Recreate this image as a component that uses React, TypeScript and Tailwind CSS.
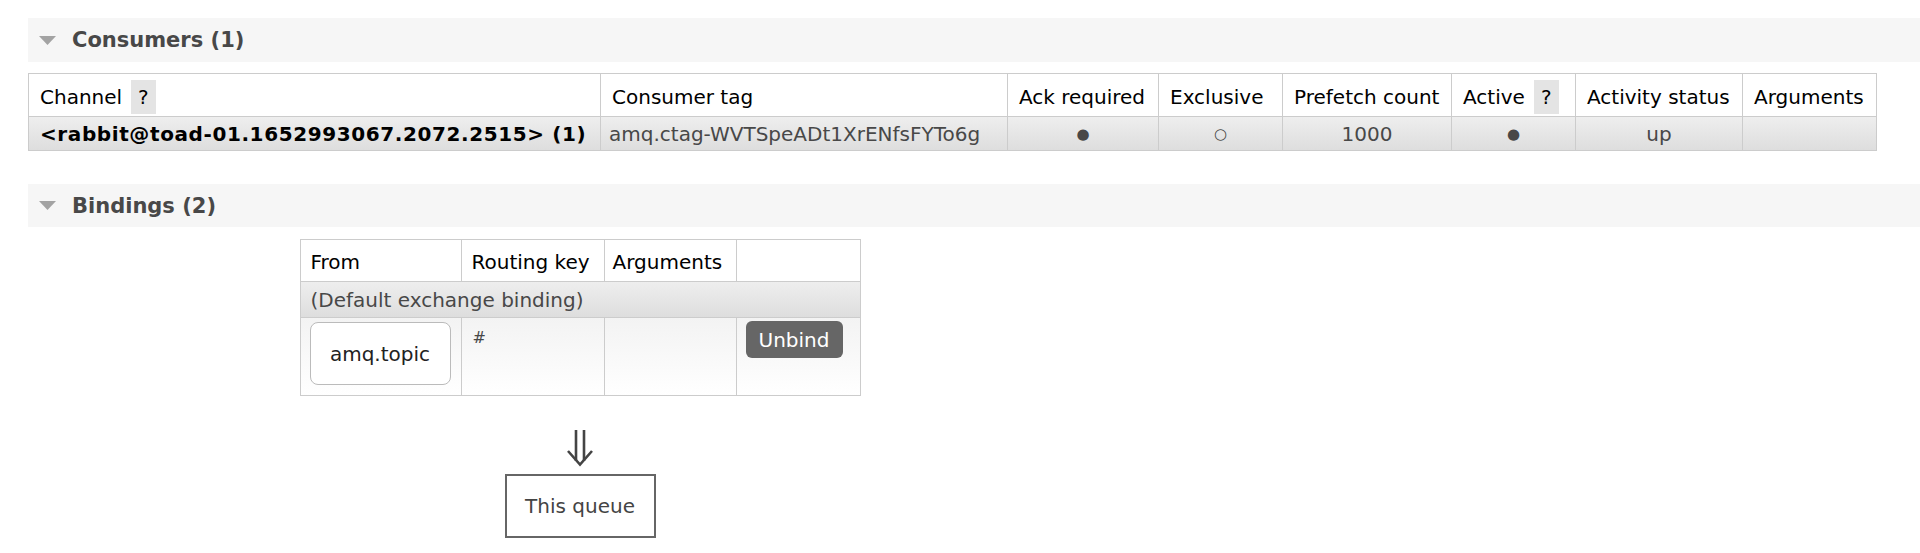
import React from "react";

function SectionHeader({ title, tall }: { title: string; tall?: boolean }) {
  return (
    <div
      className={`flex items-center bg-[#f6f6f6] pl-[11px] ${tall ? "h-[44px]" : "h-[43px]"}`}
    >
      <svg width="17" height="9" viewBox="0 0 17 9" className="mr-[16px]">
        <polygon points="0,0 17,0 8.5,9" fill="#a3a3a3" />
      </svg>
      <h2 className="text-[21px] leading-[26px] font-bold text-[#484848]">{title}</h2>
    </div>
  );
}

function Help() {
  return (
    <span className="ml-[9px] inline-block bg-[#e4e4e4] px-[7px] py-[5px] leading-[24px]">
      ?
    </span>
  );
}

const th =
  "border border-[#cccccc] px-[11px] pt-[3px] pb-0 text-left font-normal whitespace-nowrap text-black";
const td = "border border-[#cccccc] px-[11px] py-0 whitespace-nowrap text-[#484848]";
const grayRow = "h-[34px] bg-gradient-to-b from-[#eeeeee] to-[#dddddd]";

function ConsumersTable() {
  return (
    <table className="mt-[11px] w-[1848px] table-fixed border-collapse">
      <colgroup>
        <col className="w-[572px]" />
        <col className="w-[407px]" />
        <col className="w-[151px]" />
        <col className="w-[124px]" />
        <col className="w-[169px]" />
        <col className="w-[124px]" />
        <col className="w-[167px]" />
        <col className="w-[134px]" />
      </colgroup>
      <thead>
        <tr className="h-[43px] bg-white">
          <th className={th}>
            Channel
            <Help />
          </th>
          <th className={th}>Consumer tag</th>
          <th className={th}>Ack required</th>
          <th className={th}>Exclusive</th>
          <th className={th}>Prefetch count</th>
          <th className={th}>
            Active
            <Help />
          </th>
          <th className={th}>Activity status</th>
          <th className={th}>Arguments</th>
        </tr>
      </thead>
      <tbody>
        <tr className={grayRow}>
          <td className={`${td} font-bold tracking-[0.6px] text-black`}>
            &lt;rabbit@toad-01.1652993067.2072.2515&gt; (1)
          </td>
          <td className={`${td} pl-[8px]`}>amq.ctag-WVTSpeADt1XrENfsFYTo6g</td>
          <td className={`${td} text-center text-[15px]`}>●</td>
          <td className={`${td} text-center text-[15px]`}>○</td>
          <td className={`${td} text-center`}>1000</td>
          <td className={`${td} text-center text-[15px]`}>●</td>
          <td className={`${td} text-center`}>up</td>
          <td className={td}></td>
        </tr>
      </tbody>
    </table>
  );
}

function BindingsTable() {
  return (
    <table className="w-[560px] table-fixed border-collapse">
      <colgroup>
        <col className="w-[161px]" />
        <col className="w-[143px]" />
        <col className="w-[132px]" />
        <col className="w-[124px]" />
      </colgroup>
      <thead>
        <tr className="h-[42px] bg-white">
          <th className={`${th} pl-[10px]`}>From</th>
          <th className={`${th} pl-[10px]`}>Routing key</th>
          <th className={`${th} pl-[8px]`}>Arguments</th>
          <th className={th}></th>
        </tr>
      </thead>
      <tbody>
        <tr className="h-[36px] bg-gradient-to-b from-[#eeeeee] to-[#dddddd]">
          <td colSpan={4} className={`${td} pl-[10px]`}>
            (Default exchange binding)
          </td>
        </tr>
        <tr className="h-[78px] bg-gradient-to-b from-[#f3f3f3] to-white">
          <td className="border border-[#cccccc] px-[9px] pt-[4px] pb-[9px] align-top">
            <div className="flex h-[63px] w-[141px] items-center justify-center rounded-[8px] border border-[#bbbbbb] bg-white text-[#222222]">
              amq.topic
            </div>
          </td>
          <td className={`${td} align-top pt-[8px] text-[16px]`}>#</td>
          <td className={`${td} align-top`}></td>
          <td className="border border-[#cccccc] px-[9px] pt-[3px] align-top">
            <button className="h-[37px] w-[97px] rounded-[6px] bg-[#666666] text-[20px] text-white">
              Unbind
            </button>
          </td>
        </tr>
      </tbody>
    </table>
  );
}

function DoubleArrowDown() {
  return (
    <svg width="28" height="37" viewBox="0 0 28 37" className="mt-[34px]">
      <g fill="none" stroke="#444444" strokeWidth="2.6">
        <line x1="10" y1="0" x2="10" y2="31" />
        <line x1="18" y1="0" x2="18" y2="31" />
        <polyline points="2,21 14,34.5 26,21" />
      </g>
    </svg>
  );
}

export default function App() {
  return (
    <div className="min-h-[553px] bg-white pt-[18px] pl-[28px] font-['DejaVu_Sans',Verdana,sans-serif] text-[20px] leading-[24px]">
      <SectionHeader title="Consumers (1)" tall />
      <ConsumersTable />

      <div className="mt-[33px]">
        <SectionHeader title="Bindings (2)" />
      </div>

      <div className="mt-[12px] ml-[272px] flex w-[560px] flex-col items-center">
        <BindingsTable />
        <DoubleArrowDown />
        <div className="mt-[7px] flex h-[64px] w-[151px] items-center justify-center border-2 border-[#666666] text-[#444444]">
          This queue
        </div>
      </div>
    </div>
  );
}
